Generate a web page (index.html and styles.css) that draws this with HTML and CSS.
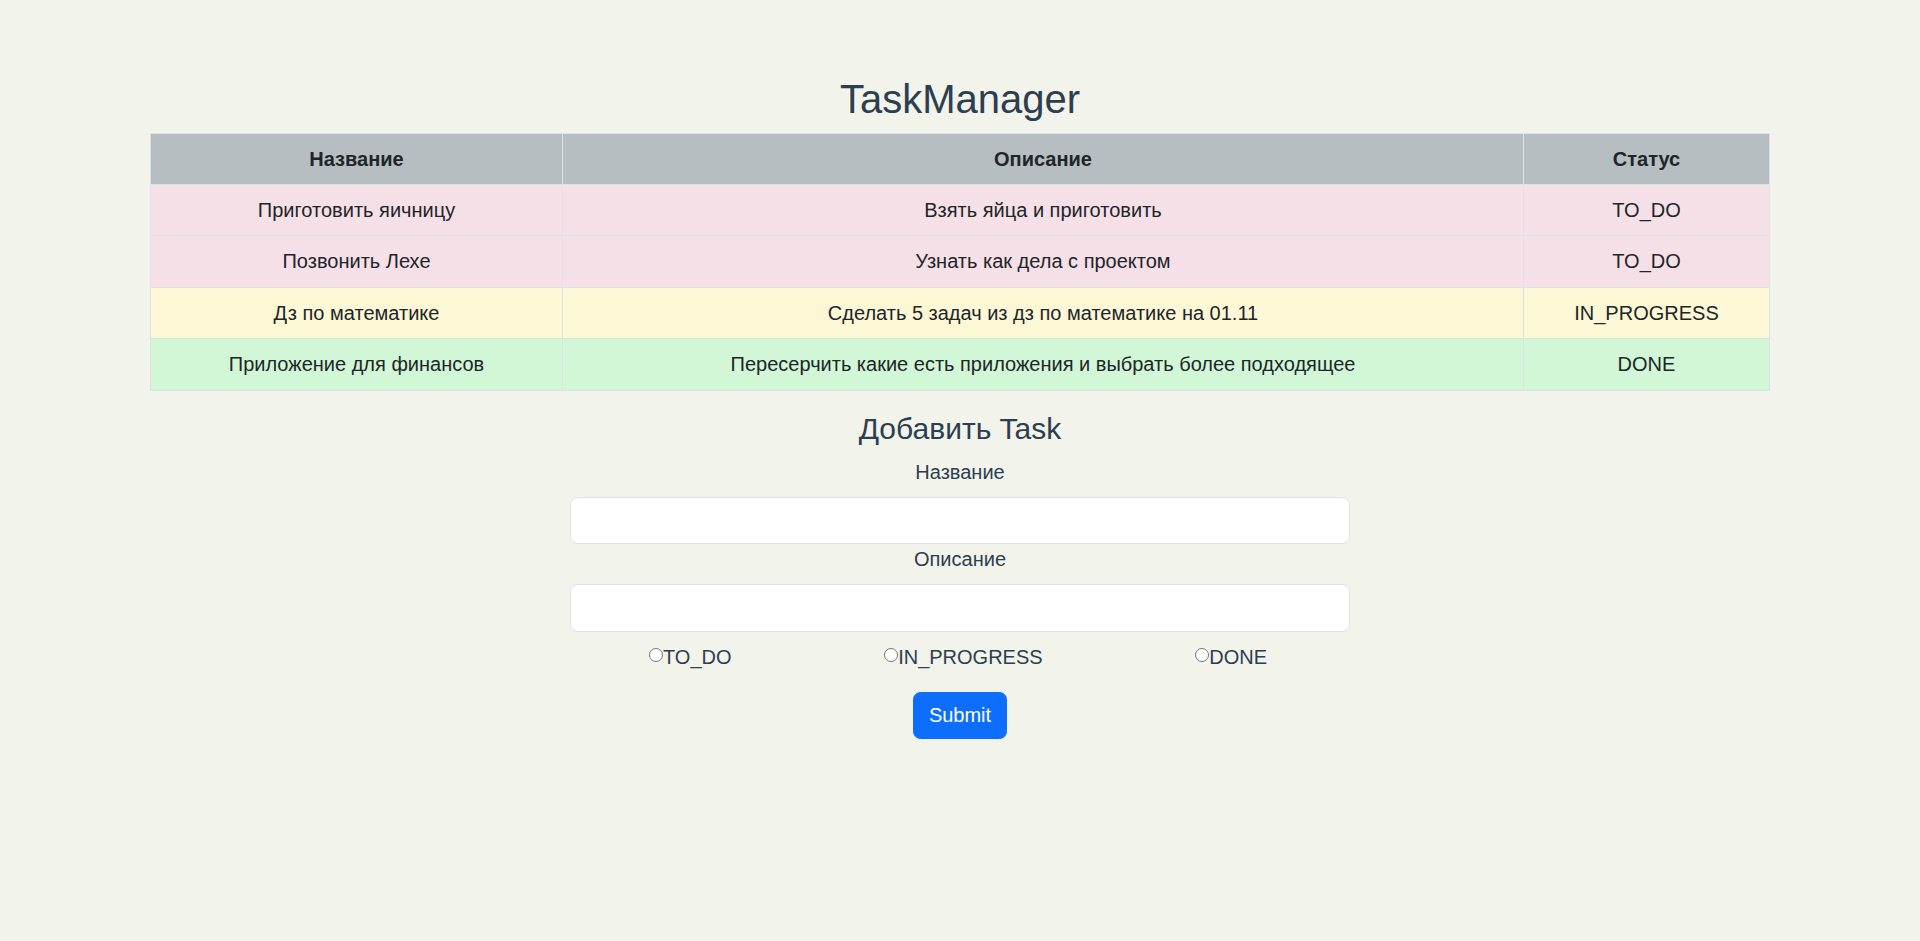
FILE: index.html
```html
<!DOCTYPE html>
<html lang="ru">
<head>
<meta charset="utf-8">
<title>TaskManager</title>
<link rel="stylesheet" href="styles.css">
</head>
<body>
<div class="app">
  <h1 class="title">TaskManager</h1>
  <table class="tasks">
    <thead>
      <tr><th class="c-name">Название</th><th class="c-desc">Описание</th><th class="c-status">Статус</th></tr>
    </thead>
    <tbody>
      <tr class="todo"><td>Приготовить яичницу</td><td>Взять яйца и приготовить</td><td>TO_DO</td></tr>
      <tr class="todo"><td>Позвонить Лехе</td><td>Узнать как дела с проектом</td><td>TO_DO</td></tr>
      <tr class="progress"><td>Дз по математике</td><td>Сделать 5 задач из дз по математике на 01.11</td><td>IN_PROGRESS</td></tr>
      <tr class="done"><td>Приложение для финансов</td><td>Пересерчить какие есть приложения и выбрать более подходящее</td><td>DONE</td></tr>
    </tbody>
  </table>
  <h4 class="subtitle">Добавить Task</h4>
  <form class="form">
    <label class="form-label" for="name">Название</label>
    <input class="form-control" id="name" type="text">
    <label class="form-label" for="desc">Описание</label>
    <input class="form-control" id="desc" type="text">
    <div class="radios">
      <label class="radio"><input type="radio" name="status">TO_DO</label>
      <label class="radio"><input type="radio" name="status">IN_PROGRESS</label>
      <label class="radio"><input type="radio" name="status">DONE</label>
    </div>
    <button class="btn" type="button">Submit</button>
  </form>
</div>
</body>
</html>
```
FILE: styles.css
```css
html, body {
  margin: 0;
  padding: 0;
  background: #f2f3eb;
}
body {
  font-family: "Liberation Sans", Arial, sans-serif;
  font-size: 20px;
  line-height: 30px;
  color: #2c3e50;
}
.app {
  text-align: center;
  padding-top: 75px;
}
.title {
  font-size: 40px;
  line-height: 48px;
  font-weight: 500;
  margin: 0 0 10px;
}
.tasks {
  width: 1620px;
  margin: 0 auto 20px;
  border-collapse: collapse;
  color: #212529;
  font-size: 20px;
}
.tasks th, .tasks td {
  border: 1px solid #dee2e6;
  padding: 10.25px 10px;
  line-height: 30px;
  text-align: center;
}
.tasks th {
  background: #b7bec1;
  font-weight: 700;
  padding-top: 10px;
  padding-bottom: 9.5px;
}
.c-name { width: 391px; }
.c-desc { width: 940px; }
.todo td { background: #f6e0e8; }
.progress td { background: #fcf8d6; }
.done td { background: #d1f7d7; }
.subtitle {
  font-size: 30px;
  line-height: 36px;
  font-weight: 500;
  margin: 0 0 10px;
}
.form {
  width: 780px;
  margin: 0 auto;
  display: flex;
  flex-direction: column;
  align-items: stretch;
}
.form-label {
  display: block;
  margin-bottom: 10px;
}
.form-control {
  box-sizing: border-box;
  height: 47.5px;
  border: 1.25px solid #dee2e6;
  border-radius: 7.5px;
  background: #fff;
  font: inherit;
  padding: 7.5px 15px;
  margin: 0;
}
.radios {
  display: flex;
  justify-content: space-between;
  padding: 0 83px 0 79px;
  margin-top: 10px;
}
.radio {
  display: inline-flex;
  align-items: flex-start;
  color: #2c3e50;
}
.radio input {
  margin: 6px 0 0 0;
  width: 14px;
  height: 14px;
}
.btn {
  align-self: center;
  margin-top: 20px;
  font-family: "Liberation Sans", Arial, sans-serif;
  font-size: 20px;
  line-height: 30px;
  color: #fff;
  background: #0d6efd;
  border: 1.25px solid #0d6efd;
  border-radius: 7.5px;
  padding: 7.5px 15px;
}
```
